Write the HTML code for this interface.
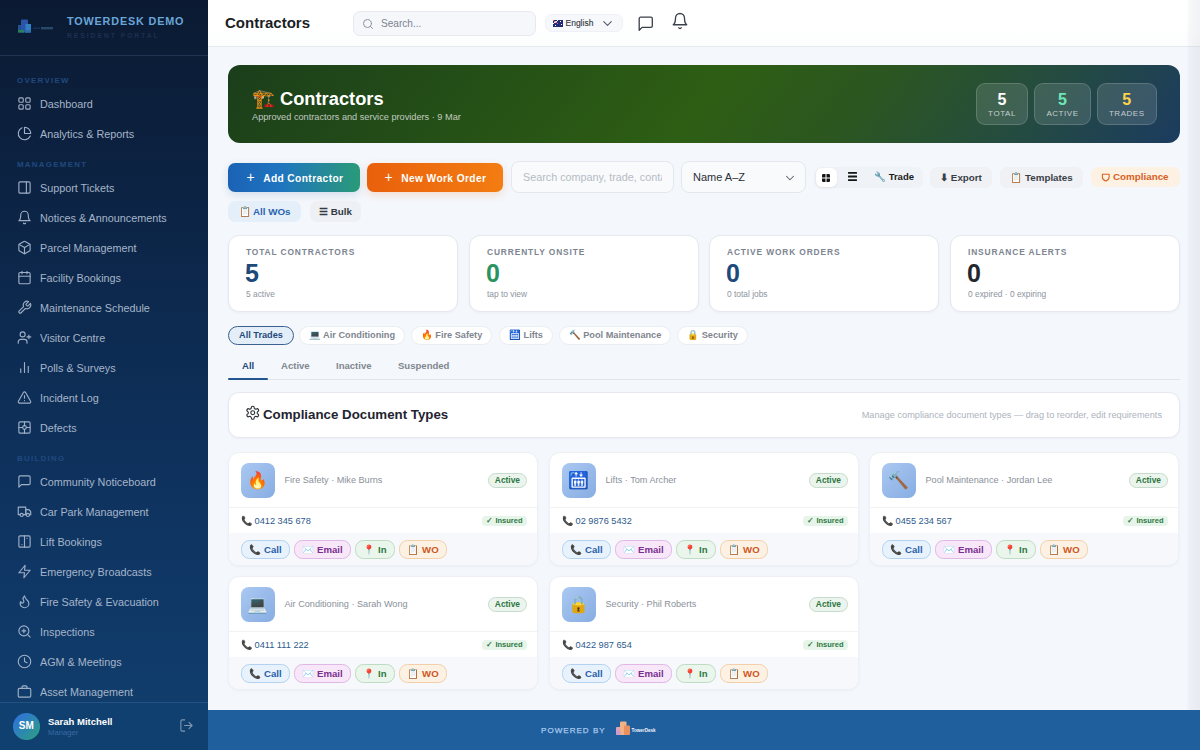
<!DOCTYPE html>
<html><head><meta charset="utf-8">
<style>
*{box-sizing:border-box;margin:0;padding:0}
html,body{width:1200px;height:750px;overflow:hidden;font-family:"Liberation Sans",sans-serif;background:#f4f7fc}
.sb{position:absolute;left:0;top:0;width:208px;height:750px;background:linear-gradient(180deg,#0b1a32 0%,#0c2343 25%,#0d2d55 50%,#0f3664 75%,#113f6e 100%);}
.sb .brand{position:absolute;left:0;top:0;width:208px;height:56px;border-bottom:1px solid rgba(120,160,210,0.18)}
.sb .bt{position:absolute;left:67px;top:15px;font-size:10.8px;font-weight:700;letter-spacing:0.85px;color:#6aa6d8}
.sb .bs{position:absolute;left:67px;top:31.8px;font-size:6.7px;font-weight:700;letter-spacing:2px;color:#1a3152}
.sec{position:absolute;left:17px;font-size:7.9px;font-weight:700;letter-spacing:1.3px;color:#20497f}
.it{position:absolute;left:0;width:208px;height:30px;font-size:10.8px;color:#a6b5c9}
.it span{position:absolute;left:40px;top:9px}
.it svg{position:absolute;left:17px;top:7px;width:15px;height:15px;fill:none;stroke:#9fb0c6;stroke-width:1.8;stroke-linecap:round;stroke-linejoin:round}
.user{position:absolute;left:0;top:702px;width:208px;height:48px;border-top:1px solid rgba(120,160,210,0.18);background:#10406f}
.av{position:absolute;left:13px;top:10px;width:26.5px;height:26.5px;border-radius:50%;background:linear-gradient(135deg,#2f74d6 15%,#2b9c88 90%);color:#fff;font-weight:700;font-size:10px;text-align:center;line-height:26.5px}
.un{position:absolute;left:48px;top:12.5px;font-size:9.5px;font-weight:700;color:#fff}
.ur{position:absolute;left:48px;top:24.5px;font-size:7.7px;color:#3869a8}
.hdr{position:absolute;left:208px;top:0;width:992px;height:47px;background:linear-gradient(180deg,#fff 60%,#fcfdfd);border-bottom:1px solid #e6e9ef}
.main{position:absolute;left:208px;top:47px;width:992px;height:663px;background:#f4f7fc}
.foot{position:absolute;left:208px;top:710px;width:992px;height:40px;background:#1f5f9e}

.ttl{position:absolute;left:17px;top:14px;font-size:15px;font-weight:700;color:#1b1e25}
.srch{position:absolute;left:145px;top:11px;width:183px;height:25px;border-radius:7px;background:#f5f7fa;border:1px solid #e6eaf0}
.srch svg{position:absolute;left:8px;top:6px;width:12px;height:12px;fill:none;stroke:#8a94a3;stroke-width:2;stroke-linecap:round}
.srch span{position:absolute;left:27px;top:6px;font-size:10.1px;color:#7b8491}
.lang{position:absolute;left:337px;top:14px;width:78px;height:18px;border-radius:7px;background:#f6f8fb;border:1px solid #eef1f5}
.lang .fl{position:absolute;left:7px;top:5px;width:10px;height:7px;background:#1f2a78}
.lang span{position:absolute;left:19.5px;top:3px;font-size:8.5px;color:#30353d;-webkit-text-stroke:0.1px #30353d}
.lang svg{position:absolute;left:54px;top:1px;width:15px;height:15px;fill:none;stroke:#555d6a;stroke-width:1.8;stroke-linecap:round;stroke-linejoin:round}
.hic{position:absolute;fill:none;stroke:#3a404a;stroke-width:1.8;stroke-linecap:round;stroke-linejoin:round}

.hero{position:absolute;left:228px;top:65px;width:952px;height:78px;border-radius:12px;background:linear-gradient(128deg,#1b3e1b 0%,#265216 30%,#2e5e14 50%,#2b5621 66%,#254c3f 82%,#1c3b60 100%);overflow:hidden}
.hero .em{position:absolute;left:23.5px;top:23px;font-size:18.5px;line-height:22px}
.hero .ht{position:absolute;left:52px;top:23px;font-size:18.3px;font-weight:700;color:#fff}
.hero .hs{position:absolute;left:24px;top:46.5px;font-size:9.2px;color:rgba(255,255,255,0.72)}
.hst{position:absolute;top:18px;height:42px;border-radius:9px;background:rgba(255,255,255,0.12);border:1px solid rgba(255,255,255,0.16);text-align:center}
.hst b{display:block;font-size:16px;line-height:17px;margin-top:6.7px;color:#fff}
.hst i{display:block;font-style:normal;font-size:8px;letter-spacing:0.55px;color:rgba(255,255,255,0.7);margin-top:1.5px}
.btn{position:absolute;top:162.5px;height:29px;border-radius:7px;color:#fff;font-size:10.2px;font-weight:700;letter-spacing:0.4px;line-height:29px;text-align:center;box-shadow:0 3px 8px rgba(30,80,150,0.15)}
.inp{position:absolute;top:161px;height:32px;border-radius:8px;background:#f8fafc;border:1px solid #e4e8ee;font-size:10.8px;line-height:30px;padding-left:11px;white-space:nowrap;overflow:hidden}
.tgl{position:absolute;left:814px;top:166.5px;width:109px;height:21px;border-radius:7px;background:#eff2f6}
.tg1{position:absolute;left:1.5px;top:1.5px;width:21px;height:18.5px;border-radius:6px;background:#fff;box-shadow:0 1px 3px rgba(0,0,0,0.07);font-size:10px;text-align:center;line-height:19px;color:#111}
.sbtn{position:absolute;top:166.5px;height:21px;border-radius:7px;font-size:9.8px;font-weight:700;line-height:21px;text-align:center;color:#3a3f47;background:#eff1f5}
.pill{position:absolute;top:201px;height:21px;border-radius:7px;font-size:9.8px;font-weight:700;line-height:21px;text-align:center}
.card{position:absolute;background:#fff;border:1px solid #e5e9ef;border-radius:11px;box-shadow:0 1px 3px rgba(20,40,80,0.04)}
.sc{top:234.5px;width:230px;height:77.5px}
.sc .l{position:absolute;left:17px;top:11.5px;font-size:8.4px;font-weight:700;letter-spacing:0.87px;color:#7c8490}
.sc .n{position:absolute;left:16px;top:23.5px;font-size:25px;font-weight:700}
.sc .s{position:absolute;left:17px;top:53px;font-size:8.4px;color:#8d949e}
.chip{position:absolute;top:326px;height:19px;border-radius:10px;background:#fff;border:1px solid #eaedf1;font-size:9.2px;font-weight:700;color:#7f868f;line-height:16px;text-align:center;white-space:nowrap}
.tab{position:absolute;top:360.2px;font-size:9.55px;font-weight:700;color:#80878f}
.chip i{font-style:normal;font-size:9.5px}

.cc{position:absolute;width:310px;height:114px;background:#fff;border:1px solid #edf0f4;border-radius:11px;overflow:hidden;box-shadow:0 1px 3px rgba(20,40,80,0.04)}
.cc .ib{position:absolute;left:11.5px;top:10px;width:34.5px;height:34.5px;border-radius:8px;background:linear-gradient(135deg,#aac8f2,#87ade2);text-align:center;line-height:35px;font-size:16.8px}
.cc .nm{position:absolute;left:55.5px;top:22px;font-size:9.15px;color:#8a9099}
.cc .ac{position:absolute;right:10px;top:20px;height:15px;padding:0 6px;border-radius:8px;background:#ebf5ed;border:1px solid #c6dbcc;color:#2e7542;font-size:8.4px;font-weight:700;line-height:13px}
.cc .dv{position:absolute;left:0;top:54px;width:100%;height:1px;background:#f0f2f5}
.cc .ph{position:absolute;left:12px;top:61.5px;font-size:9.2px;color:#2d5a8c}
.cc .ins{position:absolute;right:10px;top:63px;height:10px;padding:0 4.5px;border-radius:4px;background:#e6f4e9;color:#2d7843;font-size:7.5px;font-weight:700;line-height:10px}
.cc .ar{position:absolute;left:0;top:80px;width:100%;height:34px;background:#f6f8fb}
.ab{position:absolute;top:7px;height:19px;border-radius:8.5px;border:1px solid;font-size:9.6px;font-weight:700;line-height:17px;text-align:center;white-space:nowrap}
.ab1{left:12px;width:49px;background:#e8f2fc;border-color:#b3d2f1;color:#2a5fa8}
.ab2{left:65px;width:57px;background:#f7e7f9;border-color:#dfb8e6;color:#7a2f8f}
.ab3{left:126px;width:40px;background:#eaf5ec;border-color:#bedcc4;color:#2f7a3f}
.ab4{left:170px;width:48px;background:#fdf1e4;border-color:#f3cfa9;color:#cf561c}
.pw{position:absolute;left:333px;top:16px;font-size:8px;letter-spacing:1.05px;color:#a9c8ec;-webkit-text-stroke:0.25px #a9c8ec}
</style></head><body>
<div class="sb">
  <div class="brand">
    <svg style="position:absolute;left:17px;top:18px" width="40" height="16" viewBox="0 0 40 16">
      <rect x="1" y="7" width="6" height="7.5" fill="#24508e"/><rect x="4" y="1.5" width="7" height="13" rx="1" fill="#2a55aa"/><rect x="8.5" y="6" width="5.5" height="8.5" fill="#337fc4"/>
      <rect x="1" y="12" width="6" height="2.5" fill="#2a8058"/><rect x="8.5" y="12" width="5.5" height="2.5" fill="#2b6fa5"/>
      <rect x="16" y="9.5" width="7" height="1.6" fill="#162f52"/><rect x="24" y="9" width="12" height="2.4" fill="#284868"/>
    </svg>
    <div class="bt">TOWERDESK DEMO</div>
    <div class="bs">RESIDENT PORTAL</div>
  </div>
  <div class="sec" style="top:76px">OVERVIEW</div>
  <div class="sec" style="top:160px">MANAGEMENT</div>
  <div class="sec" style="top:454px">BUILDING</div>
  <div class="it" style="top:89px"><svg viewBox="0 0 24 24"><rect x="3" y="3" width="7" height="7" rx="1.5"/><rect x="14" y="3" width="7" height="7" rx="1.5"/><rect x="3" y="14" width="7" height="7" rx="1.5"/><rect x="14" y="14" width="7" height="7" rx="1.5"/></svg><span>Dashboard</span></div>
<div class="it" style="top:119px"><svg viewBox="0 0 24 24"><path d="M21.2 15.9A10 10 0 1 1 8 2.8"/><path d="M22 12A10 10 0 0 0 12 2v10z"/></svg><span>Analytics &amp; Reports</span></div>
<div class="it" style="top:173px"><svg viewBox="0 0 24 24"><rect x="3" y="3" width="18" height="18" rx="2"/><path d="M15 3v18"/></svg><span>Support Tickets</span></div>
<div class="it" style="top:203px"><svg viewBox="0 0 24 24"><path d="M6 8a6 6 0 0 1 12 0c0 7 3 9 3 9H3s3-2 3-9"/><path d="M10.3 21a1.94 1.94 0 0 0 3.4 0"/></svg><span>Notices &amp; Announcements</span></div>
<div class="it" style="top:233px"><svg viewBox="0 0 24 24"><path d="M21 8a2 2 0 0 0-1-1.7l-7-4a2 2 0 0 0-2 0l-7 4A2 2 0 0 0 3 8v8a2 2 0 0 0 1 1.7l7 4a2 2 0 0 0 2 0l7-4A2 2 0 0 0 21 16Z"/><path d="m3.3 7 8.7 5 8.7-5"/><path d="M12 22V12"/></svg><span>Parcel Management</span></div>
<div class="it" style="top:263px"><svg viewBox="0 0 24 24"><rect x="3" y="4" width="18" height="18" rx="2"/><path d="M16 2v4M8 2v4M3 10h18"/></svg><span>Facility Bookings</span></div>
<div class="it" style="top:293px"><svg viewBox="0 0 24 24"><path d="M14.7 6.3a1 1 0 0 0 0 1.4l1.6 1.6a1 1 0 0 0 1.4 0l3.77-3.77a6 6 0 0 1-7.94 7.94l-6.91 6.91a2.12 2.12 0 0 1-3-3l6.91-6.91a6 6 0 0 1 7.94-7.94l-3.76 3.76z"/></svg><span>Maintenance Schedule</span></div>
<div class="it" style="top:323px"><svg viewBox="0 0 24 24"><path d="M16 21v-2a4 4 0 0 0-4-4H6a4 4 0 0 0-4 4v2"/><circle cx="9" cy="7" r="4"/><path d="M19 8v6M22 11h-6"/></svg><span>Visitor Centre</span></div>
<div class="it" style="top:353px"><svg viewBox="0 0 24 24"><path d="M18 20V10M12 20V4M6 20v-6"/></svg><span>Polls &amp; Surveys</span></div>
<div class="it" style="top:383px"><svg viewBox="0 0 24 24"><path d="m21.73 18-8-14a2 2 0 0 0-3.48 0l-8 14A2 2 0 0 0 4 21h16a2 2 0 0 0 1.73-3Z"/><path d="M12 9v4M12 17h.01"/></svg><span>Incident Log</span></div>
<div class="it" style="top:413px"><svg viewBox="0 0 24 24"><rect x="3" y="3" width="18" height="18" rx="2"/><path d="M12 3v6M12 15v6M3 12h6M15 12h6"/><circle cx="12" cy="12" r="3"/></svg><span>Defects</span></div>
<div class="it" style="top:467px"><svg viewBox="0 0 24 24"><path d="M21 15a2 2 0 0 1-2 2H7l-4 4V5a2 2 0 0 1 2-2h14a2 2 0 0 1 2 2z"/></svg><span>Community Noticeboard</span></div>
<div class="it" style="top:497px"><svg viewBox="0 0 24 24"><path d="M10 17h4V5H2v12h3"/><path d="M20 17h2v-3.34a4 4 0 0 0-1.17-2.83L19 9h-5v8h1"/><circle cx="7.5" cy="17.5" r="2.5"/><circle cx="17.5" cy="17.5" r="2.5"/></svg><span>Car Park Management</span></div>
<div class="it" style="top:527px"><svg viewBox="0 0 24 24"><rect x="3" y="3" width="18" height="18" rx="2"/><path d="M12 3v18"/><path d="M8 17v.01M16 7v.01"/></svg><span>Lift Bookings</span></div>
<div class="it" style="top:557px"><svg viewBox="0 0 24 24"><path d="M13 2 3 14h9l-1 8 10-12h-9l1-8z"/></svg><span>Emergency Broadcasts</span></div>
<div class="it" style="top:587px"><svg viewBox="0 0 24 24"><path d="M8.5 14.5A2.5 2.5 0 0 0 11 12c0-1.38-.5-2-1-3-1.07-2.14-.22-4.05 2-6 .5 2.5 2 4.9 4 6.5 2 1.6 3 3.5 3 5.5a7 7 0 1 1-14 0c0-1.15.43-2.29 1-3a2.5 2.5 0 0 0 2.5 2.5z"/></svg><span>Fire Safety &amp; Evacuation</span></div>
<div class="it" style="top:617px"><svg viewBox="0 0 24 24"><circle cx="11" cy="11" r="8"/><path d="m21 21-4.3-4.3M11 8v6M8 11h6"/></svg><span>Inspections</span></div>
<div class="it" style="top:647px"><svg viewBox="0 0 24 24"><circle cx="12" cy="12" r="10"/><path d="M12 6v6l4 2"/></svg><span>AGM &amp; Meetings</span></div>
<div class="it" style="top:677px"><svg viewBox="0 0 24 24"><rect x="2" y="7" width="20" height="14" rx="2"/><path d="M16 7V5a2 2 0 0 0-2-2h-4a2 2 0 0 0-2 2v2"/></svg><span>Asset Management</span></div>

  <div class="user">
    <div class="av">SM</div>
    <div class="un">Sarah Mitchell</div>
    <div class="ur">Manager</div>
    <svg style="position:absolute;left:179px;top:15px;width:15px;height:15px;fill:none;stroke:#8497b2;stroke-width:1.7;stroke-linecap:round;stroke-linejoin:round" viewBox="0 0 24 24"><path d="M9 21H5a2 2 0 0 1-2-2V5a2 2 0 0 1 2-2h4"/><path d="m16 17 5-5-5-5M21 12H9"/></svg>
  </div>
</div>
<div class="hdr">
  <div class="ttl">Contractors</div>
  <div class="srch"><svg viewBox="0 0 24 24"><circle cx="11" cy="11" r="8"/><path d="m21 21-4.3-4.3"/></svg><span>Search...</span></div>
  <div class="lang"><div class="fl"><i style="position:absolute;left:0;top:0;width:5px;height:3.5px;background:linear-gradient(33deg,transparent 40%,#fff 40%,#d33 50%,#fff 60%,transparent 60%),linear-gradient(-33deg,transparent 40%,#fff 40%,#fff 60%,transparent 60%)"></i><i style="position:absolute;left:7px;top:1px;width:1px;height:1px;background:#fff"></i><i style="position:absolute;left:2px;top:5px;width:1px;height:1px;background:#fff"></i><i style="position:absolute;left:8px;top:4px;width:1px;height:1px;background:#fff"></i></div><span>English</span><svg viewBox="0 0 24 24"><path d="m6 9 6 6 6-6"/></svg></div>
  <svg class="hic" style="left:428.5px;top:15px;width:17.5px;height:17.5px" viewBox="0 0 24 24"><path d="M21 15a2 2 0 0 1-2 2H7l-4 4V5a2 2 0 0 1 2-2h14a2 2 0 0 1 2 2z"/></svg>
  <svg class="hic" style="left:463px;top:11.8px;width:18px;height:18px" viewBox="0 0 24 24"><path d="M6 8a6 6 0 0 1 12 0c0 7 3 9 3 9H3s3-2 3-9"/><path d="M10.3 21a1.94 1.94 0 0 0 3.4 0"/></svg>
</div>
<div class="main"></div>
<div class="hero">
  <div class="em">🏗️</div>
  <div class="ht">Contractors</div>
  <div class="hs">Approved contractors and service providers · 9 Mar</div>
  <div class="hst" style="left:748px;width:52px"><b>5</b><i>TOTAL</i></div>
  <div class="hst" style="left:806px;width:57px"><b style="color:#6ee7b7">5</b><i>ACTIVE</i></div>
  <div class="hst" style="left:869px;width:59.5px"><b style="color:#fcd34d">5</b><i>TRADES</i></div>
</div>
<div class="btn" style="left:228px;width:132px;padding-left:2px;background:linear-gradient(90deg,#1b62b5 0%,#1f75c0 40%,#2a9a78 100%)"><span style="font-size:14px;margin-right:8px;font-weight:400">+</span>Add Contractor</div>
<div class="btn" style="left:367px;width:136px;padding-left:1px;background:linear-gradient(90deg,#e9600c,#f37d12);box-shadow:0 3px 8px rgba(240,110,20,0.2)"><span style="font-size:14px;margin-right:8px;font-weight:400">+</span>New Work Order</div>
<div class="inp" style="left:511px;width:163px;color:#b6bcc4"><span style="display:block;width:139px;overflow:hidden">Search company, trade, contact</span></div>
<div class="inp" style="left:681px;width:125px;color:#2a2f38;font-size:11px">Name A–Z<svg style="position:absolute;left:101px;top:9px;width:14px;height:14px;fill:none;stroke:#5c6470;stroke-width:1.8;stroke-linecap:round;stroke-linejoin:round" viewBox="0 0 24 24"><path d="m6 9 6 6 6-6"/></svg></div>
<div class="tgl"><div class="tg1"><svg style="position:absolute;left:6.5px;top:5.5px" width="8" height="8" viewBox="0 0 8 8"><rect x="0" y="0" width="8" height="8" rx="1.2" fill="#151515"/><rect x="3.5" y="0" width="1" height="8" fill="#fff"/><rect x="0" y="3.5" width="8" height="1" fill="#fff"/></svg></div><svg style="position:absolute;left:34px;top:5.5px" width="9" height="9" viewBox="0 0 9 9"><rect x="0" y="0" width="9" height="1.8" rx="0.5" fill="#151515"/><rect x="0" y="3.6" width="9" height="1.8" rx="0.5" fill="#151515"/><rect x="0" y="7.2" width="9" height="1.8" rx="0.5" fill="#151515"/></svg><div style="position:absolute;left:60px;top:-1.5px;font-size:9.5px;font-weight:700;color:#1a1a1a;line-height:23px">🔧 Trade</div></div>
<div class="sbtn" style="left:930px;width:62px">⬇ Export</div>
<div class="sbtn" style="left:1000px;width:83px">📋 Templates</div>
<div class="sbtn" style="left:1091px;top:167px;width:89px;height:20px;line-height:19px;background:#fdf1e3;color:#d8601e;padding-left:22px;text-align:left"><svg style="position:absolute;left:9.5px;top:5.5px" width="9.5" height="9" viewBox="0 0 24 24" fill="none" stroke="#d8601e" stroke-width="2.8" stroke-linejoin="round"><path d="M3 3.5h18V11c0 6-9 10.5-9 10.5S3 17 3 11z"/></svg>Compliance</div>
<div class="pill" style="left:228px;width:73px;background:#e5eff9;color:#2b63ae">📋 All WOs</div>
<div class="pill" style="left:310px;width:51px;background:#eef0f3;color:#333a44">☰ Bulk</div>
<div class="card sc" style="left:228px"><div class="l">TOTAL CONTRACTORS</div><div class="n" style="color:#1c4a7b">5</div><div class="s">5 active</div></div>
<div class="card sc" style="left:469px"><div class="l">CURRENTLY ONSITE</div><div class="n" style="color:#2a9460">0</div><div class="s">tap to view</div></div>
<div class="card sc" style="left:709px"><div class="l">ACTIVE WORK ORDERS</div><div class="n" style="color:#1c4a7b">0</div><div class="s">0 total jobs</div></div>
<div class="card sc" style="left:950px"><div class="l">INSURANCE ALERTS</div><div class="n" style="color:#23282f">0</div><div class="s">0 expired · 0 expiring</div></div>
<div class="chip" style="left:228px;width:66px;background:#e4eef9;border-color:#3a6190;color:#1f4a7a">All Trades</div>
<div class="chip" style="left:299px;width:106px"><i>💻</i> Air Conditioning</div>
<div class="chip" style="left:411px;width:81px"><i>🔥</i> Fire Safety</div>
<div class="chip" style="left:499px;width:54px"><i>🛗</i> Lifts</div>
<div class="chip" style="left:559px;width:112px"><i>🔨</i> Pool Maintenance</div>
<div class="chip" style="left:677px;width:71px"><i>🔒</i> Security</div>
<div style="position:absolute;left:228px;top:379px;width:952px;height:1px;background:#e2e6ec"></div>
<div style="position:absolute;left:228px;top:378px;width:40px;height:2px;background:#24558c;border-radius:1px"></div>
<div class="tab" style="left:242px;color:#1f4a7a">All</div>
<div class="tab" style="left:281px">Active</div>
<div class="tab" style="left:336px">Inactive</div>
<div class="tab" style="left:398px">Suspended</div>
<div class="card" style="left:228px;top:392px;width:952px;height:46px">
  <svg style="position:absolute;left:15.5px;top:12px;width:15.5px;height:15.5px;fill:none;stroke:#2a2f38;stroke-width:1.7;stroke-linecap:round;stroke-linejoin:round" viewBox="0 0 24 24"><path d="M12.22 2h-.44a2 2 0 0 0-2 2v.18a2 2 0 0 1-1 1.73l-.43.25a2 2 0 0 1-2 0l-.15-.08a2 2 0 0 0-2.73.73l-.22.38a2 2 0 0 0 .73 2.73l.15.1a2 2 0 0 1 1 1.72v.51a2 2 0 0 1-1 1.74l-.15.09a2 2 0 0 0-.73 2.73l.22.38a2 2 0 0 0 2.73.73l.15-.08a2 2 0 0 1 2 0l.43.25a2 2 0 0 1 1 1.73V20a2 2 0 0 0 2 2h.44a2 2 0 0 0 2-2v-.18a2 2 0 0 1 1-1.73l.43-.25a2 2 0 0 1 2 0l.15.08a2 2 0 0 0 2.73-.73l.22-.39a2 2 0 0 0-.73-2.73l-.15-.08a2 2 0 0 1-1-1.74v-.5a2 2 0 0 1 1-1.74l.15-.09a2 2 0 0 0 .73-2.73l-.22-.38a2 2 0 0 0-2.73-.73l-.15.08a2 2 0 0 1-2 0l-.43-.25a2 2 0 0 1-1-1.73V4a2 2 0 0 0-2-2z"/><circle cx="12" cy="12" r="3"/></svg>
  <div style="position:absolute;left:34px;top:14px;font-size:13.3px;font-weight:700;color:#1f2430">Compliance Document Types</div>
  <div style="position:absolute;right:17px;top:16.5px;font-size:9.2px;color:#adb3bc">Manage compliance document types — drag to reorder, edit requirements</div>
</div>
<div class="cc" style="left:228px;top:452px"><div class="ib">🔥</div><div class="nm">Fire Safety · Mike Burns</div><div class="ac">Active</div><div class="dv"></div><div class="ph">📞 0412 345 678</div><div class="ins">✓ Insured</div><div class="ar"><div class="ab ab1">📞 Call</div><div class="ab ab2">✉️ Email</div><div class="ab ab3">📍 In</div><div class="ab ab4">📋 WO</div></div></div>
<div class="cc" style="left:549px;top:452px"><div class="ib">🛗</div><div class="nm">Lifts · Tom Archer</div><div class="ac">Active</div><div class="dv"></div><div class="ph">📞 02 9876 5432</div><div class="ins">✓ Insured</div><div class="ar"><div class="ab ab1">📞 Call</div><div class="ab ab2">✉️ Email</div><div class="ab ab3">📍 In</div><div class="ab ab4">📋 WO</div></div></div>
<div class="cc" style="left:869px;top:452px"><div class="ib">🔨</div><div class="nm">Pool Maintenance · Jordan Lee</div><div class="ac">Active</div><div class="dv"></div><div class="ph">📞 0455 234 567</div><div class="ins">✓ Insured</div><div class="ar"><div class="ab ab1">📞 Call</div><div class="ab ab2">✉️ Email</div><div class="ab ab3">📍 In</div><div class="ab ab4">📋 WO</div></div></div>
<div class="cc" style="left:228px;top:576px"><div class="ib">💻</div><div class="nm">Air Conditioning · Sarah Wong</div><div class="ac">Active</div><div class="dv"></div><div class="ph">📞 0411 111 222</div><div class="ins">✓ Insured</div><div class="ar"><div class="ab ab1">📞 Call</div><div class="ab ab2">✉️ Email</div><div class="ab ab3">📍 In</div><div class="ab ab4">📋 WO</div></div></div>
<div class="cc" style="left:549px;top:576px"><div class="ib">🔒</div><div class="nm">Security · Phil Roberts</div><div class="ac">Active</div><div class="dv"></div><div class="ph">📞 0422 987 654</div><div class="ins">✓ Insured</div><div class="ar"><div class="ab ab1">📞 Call</div><div class="ab ab2">✉️ Email</div><div class="ab ab3">📍 In</div><div class="ab ab4">📋 WO</div></div></div>
<div style="position:absolute;left:1186px;top:0;width:14px;height:710px;background:linear-gradient(90deg,rgba(0,20,60,0),rgba(0,20,60,0.03) 25%,rgba(0,20,60,0.055))"></div>
<div class="foot"><div class="pw">POWERED BY</div>
<svg style="position:absolute;left:407px;top:11px" width="50" height="16" viewBox="0 0 50 16"><rect x="1" y="6" width="6.5" height="8" rx="1" fill="#dca3b8"/><rect x="5" y="0.5" width="6.5" height="13.5" rx="1" fill="#f0b184"/><rect x="9" y="4.5" width="6" height="9.5" rx="1" fill="#e8915e"/><rect x="1.5" y="10" width="4" height="3.5" fill="#c99bd0"/><text x="16.5" y="11" font-size="4.6" fill="#eef3fb" font-family="Liberation Sans" font-weight="700">TowerDesk</text></svg>
</div>
</body></html>
